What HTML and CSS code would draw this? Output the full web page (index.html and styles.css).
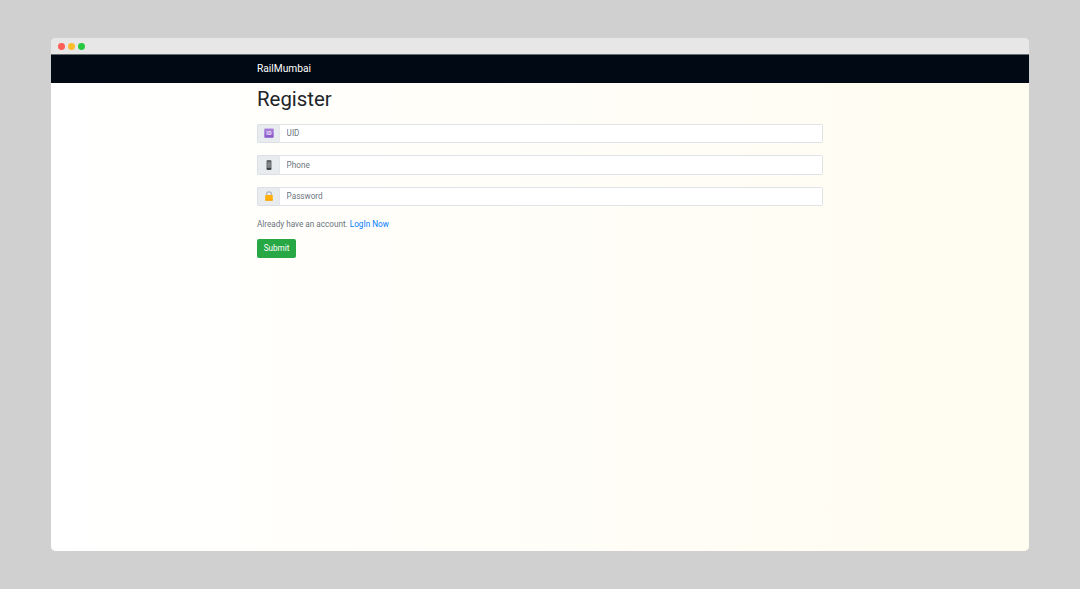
FILE: index.html
```html
<!DOCTYPE html>
<html lang="en">
<head>
<meta charset="utf-8">
<title>RailMumbai</title>
<link rel="stylesheet" href="styles.css">
</head>
<body>
<div class="window">
  <div class="titlebar"><span class="dot red"></span><span class="dot yellow"></span><span class="dot green"></span></div>
  <nav class="navbar"><a class="brand">RailMumbai</a></nav>
  <main class="page">
    <h1 class="title">Register</h1>
    <form class="form">
      <div class="group">
        <span class="addon">
          <svg width="10" height="10" viewBox="0 0 10 10"><defs><linearGradient id="g" x1="0" y1="0" x2="0" y2="1"><stop offset="0" stop-color="#ad83dc"/><stop offset="1" stop-color="#8555c8"/></linearGradient></defs><rect x=".3" y=".5" width="9.4" height="9.2" rx=".7" fill="url(#g)"/><text x="5" y="7.1" class="id-text">ID</text></svg>
        </span>
        <input class="input" type="text" placeholder="UID">
      </div>
      <div class="group">
        <span class="addon">
          <svg width="10" height="10" viewBox="0 0 10 10"><rect x="2.6" y=".3" width="4.8" height="9.4" rx=".6" fill="#454a4e"/><rect x="3.2" y="1.5" width="3.6" height="6.7" fill="#747d82"/><path d="M3.5 3h3M3.5 6.3h3" stroke="#a28a72" stroke-width=".8"/><path d="M3.5 4.7h3" stroke="#8d9ba4" stroke-width=".8"/><path d="M2.8 9h4.4" stroke="#25282a" stroke-width=".9"/></svg>
        </span>
        <input class="input" type="text" placeholder="Phone">
      </div>
      <div class="group">
        <span class="addon">
          <svg width="10" height="10" viewBox="0 0 10 10"><path d="M2.7 4.8V2.7Q2.7 .9 5 .9t2.3 1.8v2.1" fill="none" stroke="#a9b0b4" stroke-width="1.1"/><rect x="1.2" y="3.9" width="7.6" height="5.8" rx=".6" fill="#ffb00c"/><path d="M1.4 9h7.2" stroke="#f9a000"/></svg>
        </span>
        <input class="input" type="password" placeholder="Password">
      </div>
      <p class="hint">Already have an account. <a class="link">LogIn Now</a></p>
      <button class="submit" type="button">Submit</button>
    </form>
  </main>
</div>
</body>
</html>
```
FILE: styles.css
```css
* { box-sizing: border-box; }
body {
  margin: 0;
  height: 589px;
  padding: 38px 51px;
  background: #d0d0d0;
  font-family: Roboto, "Liberation Sans", sans-serif;
  font-size: 8.16px;
  line-height: 12px;
  color: #212529;
}
.window {
  display: flex;
  flex-direction: column;
  height: 512.5px;
  border-radius: 5px;
  overflow: hidden;
  background: #fffcf0;
}
.titlebar {
  display: flex;
  align-items: center;
  gap: 3.4px;
  flex: none;
  height: 16px;
  padding: 1.4px 0 0 6.8px;
  background: #e7e7e7;
}
.dot { width: 6.8px; height: 6.8px; border-radius: 50%; }
.red { background: #ff5f57; }
.yellow { background: #febc2e; }
.green { background: #28c840; }
.navbar {
  flex: none;
  height: 29px;
  padding: 6px 206px 0;
  background: #000914;
  border-top: 1px solid #667073;
}
.brand { display: block; font-size: 10.2px; line-height: 15px; color: #fff; }
.page {
  flex: 1;
  padding: 4px 206px 0;
  background: linear-gradient(to right, #fff, #fffcf0);
}
.title { margin: 0 0 12px; font-size: 20.4px; line-height: 24.5px; font-weight: 400; }
.group { display: flex; height: 19.6px; margin-bottom: 12px; }
.addon {
  display: flex;
  align-items: center;
  justify-content: center;
  width: 23px;
  background: #e9ecef;
  border: 1px solid #dce0e5;
  border-right-color: #e3e7eb;
  border-radius: 2px 0 0 2px;
}
.id-text { font-size: 5.6px; font-weight: 700; text-anchor: middle; fill: #efe5fb; }
.input {
  flex: 1;
  min-width: 0;
  padding: 0 6.6px;
  background: #fff;
  border: 1px solid #dfe3e8;
  border-left: 0;
  border-radius: 0 2px 2px 0;
  font: inherit;
}
.input::placeholder { color: #6c757d; opacity: 1; }
.hint { margin: 0 0 8.7px; color: #6c757d; }
.link { color: #007bff; }
.submit {
  display: block;
  width: 39px;
  height: 19.4px;
  padding: 0 0 1px;
  background: #28a745;
  border: 0;
  border-radius: 2px;
  font: inherit;
  color: #fff;
}
```
